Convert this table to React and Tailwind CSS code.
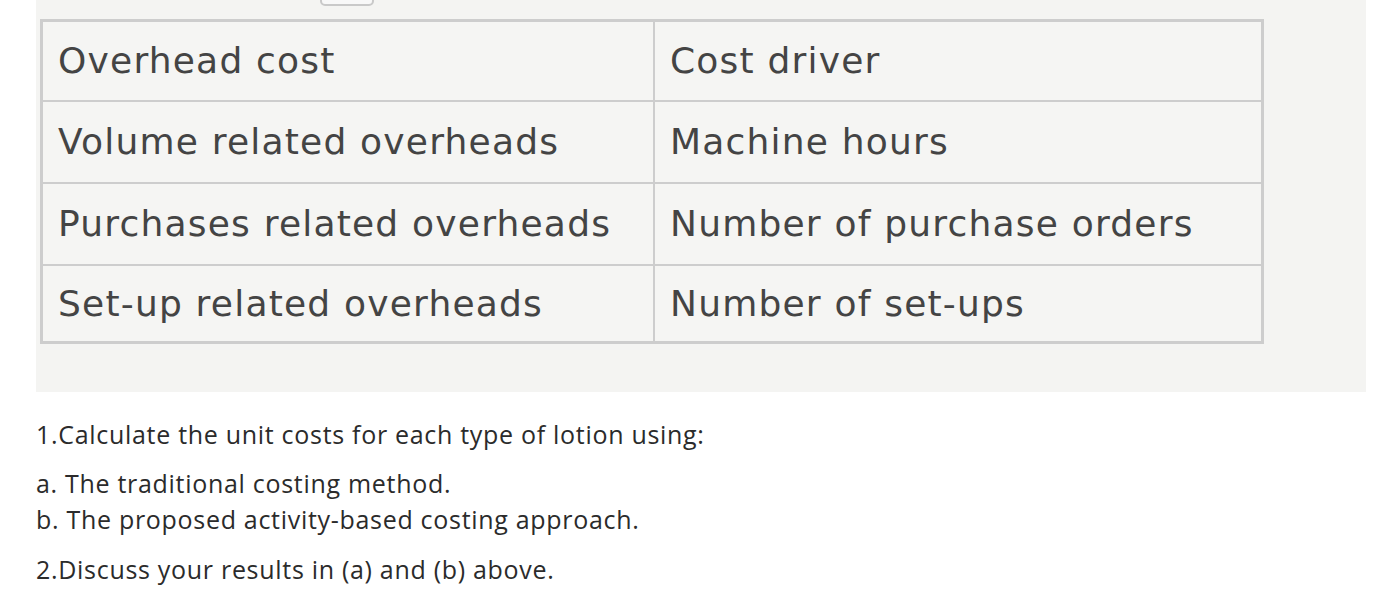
const rows = [
  ["Overhead cost", "Cost driver", "h-[78px]"],
  ["Volume related overheads", "Machine hours", "h-[82px]"],
  ["Purchases related overheads", "Number of purchase orders", "h-[82px]"],
  ["Set-up related overheads", "Number of set-ups", "h-[77px]"],
];

export default function App() {
  return (
    <div className="w-[1392px] h-[598px] bg-white overflow-hidden">
      {/* scanned table image */}
      <div className="relative ml-[36px] w-[1330px] h-[392px] bg-[#f4f4f2] pt-[19px] pl-[4px]">
        <div className="absolute left-[284px] -top-[6px] w-[54px] h-[12px] rounded-[5px] border-2 border-[#c9c9c9] bg-[#f8f8f8]" />
        <div className="w-[1224px] border-[3px] border-[#cdcdcd] bg-[#f5f5f3] text-[#444] font-['DejaVu_Sans',sans-serif] text-[36px] tracking-[1.2px]">
          {rows.map(([a, b, h], i) => (
            <div key={i} className={`flex ${h} ${i > 0 ? "border-t-2 border-[#cdcdcd]" : ""}`}>
              <div className="w-[612px] flex items-center pl-[15px] border-r-2 border-[#cdcdcd]">{a}</div>
              <div className="flex-1 flex items-center pl-[15px]">{b}</div>
            </div>
          ))}
        </div>
      </div>

      <div className="pl-[36px] pt-[24px] text-[25px] leading-[36px] tracking-[0.7px] text-[#2b2b2b] font-['Open_Sans',sans-serif]">
        <p>1.Calculate the unit costs for each type of lotion using:</p>
        <p className="mt-[13px]">a. The traditional costing method.</p>
        <p>b. The proposed activity-based costing approach.</p>
        <p className="mt-[14px]">2.Discuss your results in (a) and (b) above.</p>
      </div>
    </div>
  );
}
